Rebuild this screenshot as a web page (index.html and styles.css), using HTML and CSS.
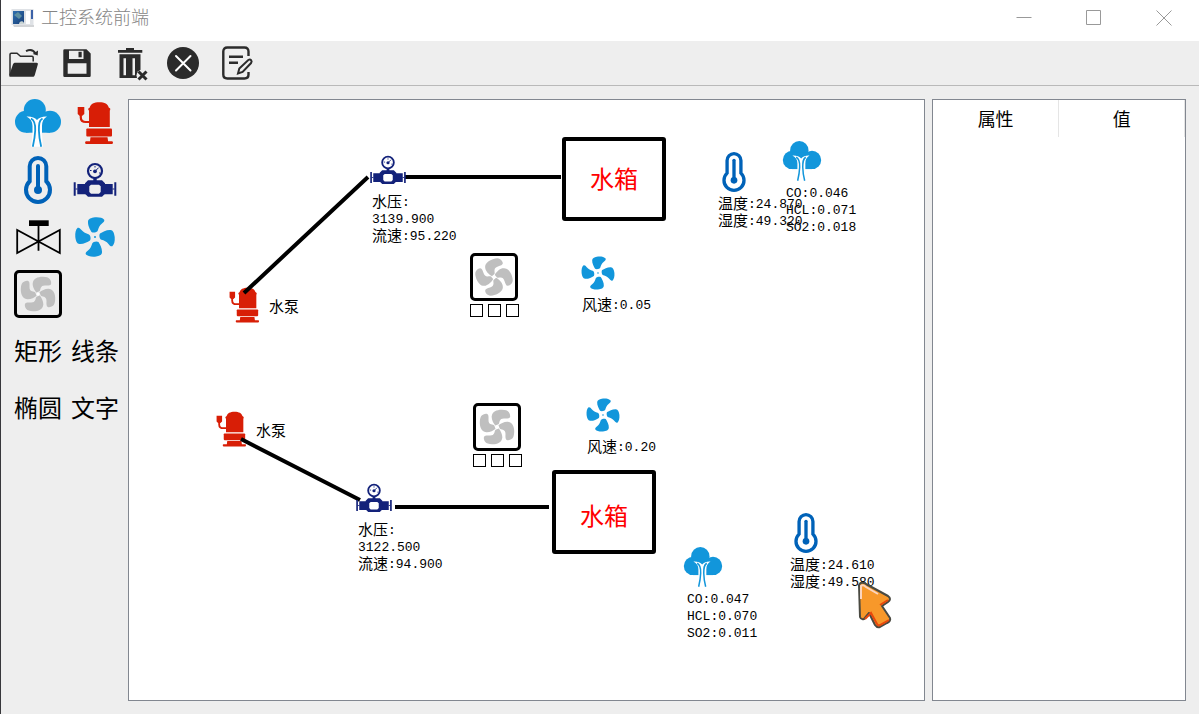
FILE: index.html
```html
<!DOCTYPE html>
<html lang="zh-CN">
<head>
<meta charset="utf-8">
<title>工控系统前端</title>
<link rel="stylesheet" href="styles.css">
</head>
<body>
<svg class="defs" aria-hidden="true">
  <symbol id="tree" viewBox="0 0 48 48">
    <g fill="#1296db"><circle cx="20.800" cy="11" r="11"/><circle cx="12" cy="22.700" r="11"/><circle cx="36" cy="22.700" r="11"/><path d="M12 14h24v19.700H12z"/></g>
    <path fill="#fff" d="M12.500 17.500C17 17.200 21 18.500 23 21c2-2.500 6-3.800 10-3.500-3.500 2-5 5-5 9.500V34l.8 13.700H17l1.500-13.700v-7c0-4.500-2-7.500-6-9.500z"/>
    <path fill="none" stroke="#1296db" stroke-width="1.800" d="M17 19.500c4 2 4.500 6 4.200 12-.2 6-1.200 11-2.400 16.200M28.500 19.500c-3.500 2-3.600 6-3.600 12 .1 6 1 11 2.300 16.200"/>
  </symbol>
  <symbol id="pump" viewBox="0 0 48 48">
    <g fill="#d81e06"><path d="M17.300 11V9.500l1.500-1C19.500 5 23 3.200 28.300 3.200S37 5 37.700 8.500l1.500 1V11l-.4.500V28H18V11.500z"/><rect x="15.300" y="29.400" width="25.700" height="8" rx="1"/><path d="M19.500 38.300h17l.6 4h4c1.200 0 1.200 2.600 0 2.600H15c-1.200 0-1.200-2.600 0-2.600h4z"/><path d="M6.700 8h6.600v7l-2 1.800H8.500L6.700 15z"/></g>
    <path fill="none" stroke="#d81e06" stroke-width="2.200" d="M9.800 16v2.500c0 3 2 4.500 5 4.500H19"/>
  </symbol>
  <symbol id="thermo" viewBox="0 0 48 48">
    <path fill="none" stroke="#0062b8" stroke-width="4" d="M15.700 25.300V10.300a8.300 8.300 0 0 1 16.600 0v15a12 12 0 1 1-16.600 0z"/>
    <path stroke="#0062b8" stroke-width="4" stroke-linecap="round" d="M24 10v23"/><circle cx="24" cy="34" r="4" fill="#0062b8"/>
  </symbol>
  <symbol id="meter" viewBox="0 0 48 48">
    <g fill="#13227a"><path d="M2.700 26.300h2v13.400h-2zM43.300 26.300h2v13.400h-2zM6.300 28H15v10.300H6.300zM33 28h8.700v10.300H33zM22.300 22h3.400v4h-3.400z"/><path fill-rule="evenodd" d="M17 24.300h14l3 3v10.500l-3 3H17l-3-3V27.300zM20 28.700l-1.700 1.600v5.800l1.700 1.600h8l1.700-1.600v-5.800L28 28.700z"/><circle cx="24" cy="15.300" r="1.900"/></g>
    <circle cx="24" cy="15" r="7" fill="none" stroke="#13227a" stroke-width="2.200"/>
    <path stroke="#13227a" d="m24 15.300 3.700-3.700M4.500 33h2M41.500 33h2M19 14.500h1.500M24 10v1.500M28 17h1.500"/>
  </symbol>
  <symbol id="valve" viewBox="0 0 48 48">
    <path d="M15 7.300h19.700V13H15z"/><path fill="none" stroke="#000" stroke-width="1.800" d="M24.500 12v25.700M3.200 17v23l42.600-23v23z"/>
  </symbol>
  <symbol id="fan" viewBox="0 0 48 48">
    <g transform="translate(24 24)" fill="#1296db">
      <path id="blade" d="M-3.500-5C-5-7.500-7.300-11.500-7-15.500-6.800-18-4-19.200 0-19.700 4-20 7.500-19.300 9.200-17.300 9.800-15.800 8.500-14.800 7-13.500 4.500-11.500 3.500-9 2.800-6.500 2.200-4.500-2-3.800-3.500-5z"/>
      <use href="#blade" transform="rotate(90)"/><use href="#blade" transform="rotate(180)"/><use href="#blade" transform="rotate(270)"/><circle r="1"/>
    </g>
  </symbol>
  <symbol id="wheel" viewBox="-21 -21 42 42">
    <g fill="#bfbfbf">
      <path id="vane" d="M-1.700-1.500C-3.500-3.500-5.600-7.500-5.300-10.700-5-13.500-3.500-15-2-15.700 0-16.800 2.500-17.300 5-17.200 8.500-17 10.500-16.500 11.700-15 13-13.300 13.500-11.500 13-9.800 12.300-8.300 10-8.400 7.300-8.500 4.700-8.600 3.500-7.800 2.700-6 2.200-4.500 2.200-3.500 1.500-2.700z"/>
      <use href="#vane" transform="rotate(90)"/><use href="#vane" transform="rotate(180)"/><use href="#vane" transform="rotate(270)"/>
    </g>
    <circle r="1.500" fill="#fff"/>
  </symbol>
</svg>

<div class="window">
  <header class="titlebar">
    <svg class="app-icon" viewBox="0 0 24 20" aria-hidden="true">
      <defs><linearGradient id="pic" x2="1" y2="1"><stop stop-color="#2f6fae"/><stop offset="1" stop-color="#183f78"/></linearGradient></defs>
      <rect x=".5" y="1" width="22" height="16" fill="#dfe2e6"/><path fill="#d2d4d6" d="M2 17h21v2H3z"/><rect x="2" y="3" width="11" height="13" fill="url(#pic)"/><path fill="#5e8fa0" d="M3 7l4-3 4 4-3 3z"/><path fill="#c9d4d4" d="M8 16c0-3 4-4 5-1v1z"/><path fill="#fff" d="M15 3h4v13h-4z"/><path fill="#3c62a8" d="M20 2h2v9h-2z"/>
    </svg>
    <h1 class="title">工控系统前端</h1>
    <div class="window-buttons">
      <button type="button" aria-label="最小化"><svg viewBox="0 0 16 16"><path d="M.5 7.500h15"/></svg></button>
      <button type="button" aria-label="最大化"><svg viewBox="0 0 16 16"><path d="M.5.5h14v14H.5z"/></svg></button>
      <button type="button" aria-label="关闭"><svg viewBox="0 0 16 16"><path d="m.5.5 15 15M15.500.5l-15 15"/></svg></button>
    </div>
  </header>

  <nav class="toolbar" aria-label="工具栏">
    <button type="button" aria-label="打开"><svg viewBox="0 0 32 32"><path fill="none" stroke="#2b2b2b" stroke-width="1.500" d="M2 28V7.500q0-1.200 1.200-1.200H9l3.500 3H24q1.200 0 1.200 1.200v4"/><path fill="#2b2b2b" d="M7.500 15.800h21c1.300 0 1.600.7 1.300 1.700l-3 10.500c-.4 1.300-1 1.800-2.300 1.800H2.500c-1.200 0-1.500-.8-1.200-1.800l3.600-10.400c.4-1.200 1.200-1.800 2.600-1.800z"/><path fill="none" stroke="#2b2b2b" stroke-width="2" d="M18 4.200c4-2 7.500-1 9.500 2.300"/><path fill="#2b2b2b" d="m30 3.500-.3 5-5-1.500z"/></svg></button>
    <button type="button" aria-label="保存"><svg viewBox="0 0 32 32"><path fill="#2b2b2b" fill-rule="evenodd" d="M3.500 2.300h22l4.200 4.200v22.300q0 1.200-1.200 1.200h-25q-1.200 0-1.200-1.200V3.500q0-1.200 1.200-1.200zM8 3.800V12h14.500V3.800zM6.700 16.300v10.500h18.800V16.300z"/><path fill="#2b2b2b" d="M17.500 4.800h3.200v5.500h-3.200z"/></svg></button>
    <button type="button" aria-label="删除"><svg viewBox="0 0 32 32"><path fill="#2b2b2b" fill-rule="evenodd" d="M4 3h8V1h8v2h8.300v2.700H4zM5.500 7.300h21V31h-21zM9.500 11.300v17H12v-17zM18.500 11.300v17H21v-17z"/><circle cx="28.500" cy="28.500" r="6" fill="#eee"/><path stroke="#2b2b2b" stroke-width="3" d="m24.500 24.500 8 8M32.500 24.500l-8 8"/></svg></button>
    <button type="button" aria-label="取消"><svg viewBox="0 0 32 32"><circle cx="16" cy="16" r="16" fill="#2b2b2b"/><path stroke="#fff" stroke-width="2" stroke-linecap="round" d="m9 9 14.500 14.500M23.500 9 9 23.500"/></svg></button>
    <button type="button" aria-label="编辑"><svg viewBox="0 0 32 32"><g fill="none" stroke="#2b2b2b" stroke-width="2.400"><path d="M28.500 9V4.500Q28.500.5 24.500.5H7.300q-4 0-4 4v23q0 4 4 4h17.200q4 0 4-4V25M9 9.800h14M9 15.800h9"/><path stroke-width="2" d="m18 26.500 1.300-5 9-8.500q1.700-1 2.800.2t0 2.800l-8.500 9z"/></g></svg></button>
  </nav>

  <main class="workspace">
    <aside class="palette" aria-label="组件">
      <button type="button" aria-label="空气"><svg><use href="#tree"/></svg></button>
      <button type="button" aria-label="水泵"><svg><use href="#pump"/></svg></button>
      <button type="button" aria-label="温度"><svg><use href="#thermo"/></svg></button>
      <button type="button" aria-label="水压"><svg><use href="#meter"/></svg></button>
      <button type="button" aria-label="阀门"><svg><use href="#valve"/></svg></button>
      <button type="button" aria-label="风速"><svg><use href="#fan"/></svg></button>
      <button type="button" class="blower" aria-label="风机"><svg><use href="#wheel"/></svg></button>
      <button type="button" class="word shape-rect">矩形</button>
      <button type="button" class="word">线条</button>
      <button type="button" class="word">椭圆</button>
      <button type="button" class="word">文字</button>
    </aside>

    <section class="canvas" aria-label="画布">
      <div class="node pump pump-a"><svg><use href="#pump"/></svg><p><b>水泵</b></p></div>
      <div class="node pump pump-b"><svg><use href="#pump"/></svg><p><b>水泵</b></p></div>
      <svg class="pipes" aria-hidden="true"><path d="M115 193 239 77M276 77h156M112 339l119 61M266 407h154"/></svg>
      <div class="node meter-a"><svg><use href="#meter"/></svg><p><b>水压</b>:<br>3139.900<br><b>流速</b>:95.220</p></div>
      <div class="node meter-b"><svg><use href="#meter"/></svg><p><b>水压</b>:<br>3122.500<br><b>流速</b>:94.900</p></div>
      <div class="tank tank-a">水箱</div>
      <div class="tank tank-b">水箱</div>
      <div class="node thermo-a"><svg><use href="#thermo"/></svg><p><b>温度</b>:24.870<br><b>湿度</b>:49.320</p></div>
      <div class="node thermo-b"><svg><use href="#thermo"/></svg><p><b>温度</b>:24.610<br><b>湿度</b>:49.580</p></div>
      <div class="node tree-a"><svg><use href="#tree"/></svg><p>CO:0.046<br>HCL:0.071<br>SO2:0.018</p></div>
      <div class="node tree-b"><svg><use href="#tree"/></svg><p>CO:0.047<br>HCL:0.070<br>SO2:0.011</p></div>
      <div class="node fan-a"><svg><use href="#fan"/></svg><p><b>风速</b>:0.05</p></div>
      <div class="node fan-b"><svg><use href="#fan"/></svg><p><b>风速</b>:0.20</p></div>
      <div class="unit unit-a"><div class="blower"><svg class="turned"><use href="#wheel"/></svg></div><div class="cells"><i></i><i></i><i></i></div></div>
      <div class="unit unit-b"><div class="blower"><svg><use href="#wheel"/></svg></div><div class="cells"><i></i><i></i><i></i></div></div>
      <svg class="pointer" viewBox="0 0 38 50" aria-hidden="true"><path fill="#f7982a" stroke="#4a4a42" stroke-width="2" stroke-linejoin="round" d="M2 4q2-4 7-1l22 12q4 3 0 6l-6 4 8 12q1 3-3 5l-7 4q-3 1-5-2l-6-12-5 6q-3 1-4-2z"/><path fill="none" stroke="#fbd5c0" stroke-width="2" d="M4 18V5q2-2 5 1l12 7"/><path fill="none" stroke="#e8480c" stroke-width="2" d="m31 19-8 5M32 39l-9 5q-2 1-3-1l-6-11-6 6"/></svg>
    </section>

    <section class="properties" aria-label="属性面板">
      <table>
        <thead><tr><th scope="col">属性</th><th scope="col">值</th></tr></thead>
        <tbody></tbody>
      </table>
    </section>
  </main>
</div>
</body>
</html>
```
FILE: styles.css
```css
* {
  box-sizing: border-box;
}

body {
  margin: 0;
  font-family: "Liberation Sans", "Noto Sans CJK SC", sans-serif;
  color: #000;
}

button {
  padding: 0;
  border: 0;
  background: none;
  color: inherit;
  font: inherit;
}

svg {
  display: block;
  overflow: visible;
}

p {
  margin: 0;
}

.defs {
  position: absolute;
  width: 0;
  height: 0;
}

.window {
  display: flex;
  flex-direction: column;
  min-height: 100vh;
  border-left: 1px solid #37373b;
  background: #eee;
}

/* Title bar */
.titlebar {
  display: flex;
  align-items: center;
  height: 41px;
  padding: 0 0 6px 10px;
  background: #fff;
}

.app-icon {
  width: 24px;
  height: 20px;
}

.title {
  flex: 1;
  margin: 0 0 0 6px;
  color: #858585;
  font-size: 18px;
  font-weight: 300;
  line-height: 24px;
}

.window-buttons {
  display: flex;
}

.window-buttons button {
  display: grid;
  place-items: center;
  width: 70px;
  height: 34px;
}

.window-buttons svg {
  width: 16px;
  height: 16px;
  fill: none;
  stroke: #999;
}

/* Toolbar */
.toolbar {
  display: flex;
  align-items: center;
  gap: 21px;
  height: 45px;
  padding-left: 7px;
  border-bottom: 1px solid #b9b9b9;
}

.toolbar svg {
  width: 32px;
  height: 32px;
}

/* Main area */
.workspace {
  flex: 1;
  display: grid;
  grid-template-columns: 120px 1fr 254px;
  gap: 7px;
  padding: 13px 13px 13px 0;
}

.palette {
  display: grid;
  grid-template-columns: repeat(2, 48px);
  grid-auto-rows: 48px;
  gap: 9px;
  padding-left: 13px;
}

.palette svg {
  width: 48px;
  height: 48px;
}

.blower {
  display: grid;
  place-items: center;
  width: 48px;
  height: 48px;
  border: 3px solid #000;
  border-radius: 5px;
}

.blower svg {
  width: 42px;
  height: 42px;
}

.turned {
  rotate: -20deg;
}

.word {
  padding-top: 2px;
  font-size: 24px;
  line-height: 46px;
  white-space: nowrap;
}

.shape-rect {
  grid-column: 1;
}

.canvas,
.properties {
  border: 1px solid #828790;
  background: #fff;
}

/* Drawing canvas: every item has its own place on the sheet */
.canvas {
  position: relative;
  overflow: hidden;
}

.node,
.unit,
.tank,
.pipes,
.pointer {
  position: absolute;
}

.node {
  display: grid;
  gap: 4px;
  font-family: "Liberation Mono", "Noto Sans CJK SC", monospace;
  font-size: 13px;
  line-height: 17px;
  white-space: nowrap;
}

.node svg {
  width: 40px;
  height: 40px;
}

.node p {
  padding-left: 4px;
}

.node b {
  font-size: 15px;
  font-weight: 400;
  line-height: 1;
  vertical-align: -1px;
}

.pump {
  display: flex;
  align-items: center;
  gap: 1px;
}

.pump p {
  padding-top: 4px;
}

.cells {
  display: flex;
  gap: 5px;
  padding-top: 3px;
}

.cells i {
  width: 13px;
  height: 13px;
  border: 1px solid #000;
}

.tank {
  display: grid;
  place-items: center;
  width: 104px;
  height: 84px;
  padding-top: 2px;
  border: 4px solid #000;
  border-radius: 3px;
  color: #f00;
  font-size: 24px;
  line-height: 32px;
}

.pipes {
  inset: 0;
  width: 100%;
  height: 100%;
  fill: none;
  stroke: #000;
  stroke-width: 4;
}

.pump-a { left: 95px; top: 185px; }
.pump-b { left: 82px; top: 309px; }
.meter-a { left: 239px; top: 50px; }
.meter-b { left: 225px; top: 378px; }
.tank-a { left: 433px; top: 37px; }
.tank-b { left: 423px; top: 370px; padding-top: 10px; }
.thermo-a { left: 585px; top: 52px; }
.thermo-b { left: 657px; top: 413px; }
.tree-a { left: 653px; top: 41px; }
.tree-b { left: 554px; top: 447px; }
.fan-a { left: 449px; top: 153px; }
.fan-b { left: 454px; top: 295px; }
.unit-a { left: 341px; top: 153px; }
.unit-b { left: 344px; top: 303px; }

.pointer {
  left: 728px;
  top: 481px;
  width: 38px;
  height: 50px;
}

/* Property table */
.properties table {
  width: 100%;
  border-collapse: collapse;
  table-layout: fixed;
}

.properties th {
  height: 37px;
  padding: 2px 0 0;
  border-right: 1px solid #e5e5e5;
  font-size: 18px;
  font-weight: 400;
  line-height: 24px;
}
```
